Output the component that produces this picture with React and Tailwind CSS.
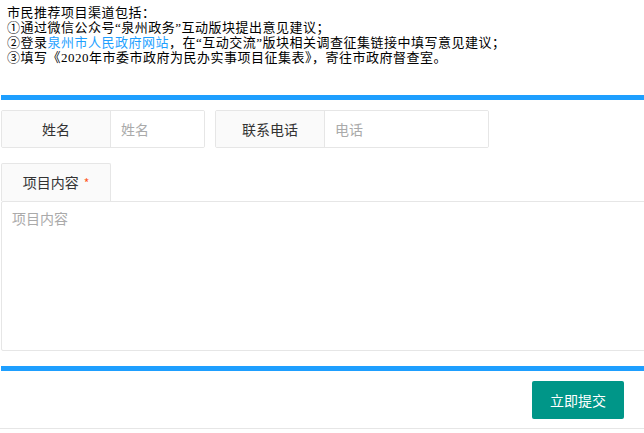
// Project suggestion form
import React, { useState } from 'react';

const cjk = { fontFamily: '"Liberation Serif", "Noto Sans CJK SC", serif' };

const FieldBox = ({ label, placeholder, width, value, onChange }) => (
    <div className={`flex h-[38px] border border-[#e6e6e6] rounded-[2px] overflow-hidden ${width}`}>
        <label className="w-[109px] shrink-0 flex items-center justify-center bg-[#fafafa] border-r border-[#e6e6e6] text-[14px] text-[#333]">
            {label}
        </label>
        <input
            type="text"
            value={value}
            onChange={onChange}
            placeholder={placeholder}
            className="flex-1 min-w-0 px-[10px] text-[14px] text-[#333] outline-none placeholder:text-[#aaa] bg-white"
        />
    </div>
);

const App = () => {
    const [formData, setFormData] = useState({ name: '', phone: '', content: '' });

    const handleChange = (key) => (e) => {
        setFormData({ ...formData, [key]: e.target.value });
    };

    return (
        <div className="w-[644px] h-[433px] overflow-hidden bg-white text-black font-['Noto_Sans_CJK_SC',sans-serif]">
            <div className="pt-[5px] pl-[7px] text-[13px] leading-[15px] tracking-[0.5px] text-black whitespace-nowrap" style={cjk}>
                <p>市民推荐项目渠道包括：</p>
                <p>①通过微信公众号“泉州政务”互动版块提出意见建议；</p>
                <p>
                    ②登录<a href="#" className="text-[#1e9fff]">泉州市人民政府网站</a>，在“互动交流”版块相关调查征集链接中填写意见建议；
                </p>
                <p>③填写《2020年市委市政府为民办实事项目征集表》，寄往市政府督查室。</p>
            </div>

            <div className="pl-[1px]">
                <div className="mt-[30px] h-[5px] bg-[#1e9fff]" />

                <div className="mt-[10px] flex gap-[10px]">
                    <FieldBox label="姓名" placeholder="姓名" width="w-[204px]" value={formData.name} onChange={handleChange('name')} />
                    <FieldBox label="联系电话" placeholder="电话" width="w-[274px]" value={formData.phone} onChange={handleChange('phone')} />
                </div>

                <div className="mt-[15px] w-[110px] h-[38px] flex items-center justify-center bg-[#fafafa] border border-b-0 border-[#e6e6e6] rounded-t-[2px] text-[14px] text-[#333]">
                    项目内容<span className="ml-[5px] text-[#ff5722] text-[12px]">*</span>
                </div>
                <textarea
                    value={formData.content}
                    onChange={handleChange('content')}
                    placeholder="项目内容"
                    className="block w-[680px] h-[150px] px-[10px] py-[6px] leading-[20px] text-[14px] text-[#333] border border-[#e6e6e6] rounded-[2px] outline-none resize-none placeholder:text-[#aaa]"
                />

                <div className="mt-[15px] h-[5px] bg-[#1e9fff]" />

                <div className="mt-[10px] flex justify-end pr-[20px]">
                    <button
                        type="button"
                        className="h-[38px] w-[92px] rounded-[2px] bg-[#009688] text-white text-[14px]"
                    >
                        立即提交
                    </button>
                </div>
            </div>
            <div className="mt-[9px] border-t border-[#e6e6e6]" />
        </div>
    );
};

export default App;
